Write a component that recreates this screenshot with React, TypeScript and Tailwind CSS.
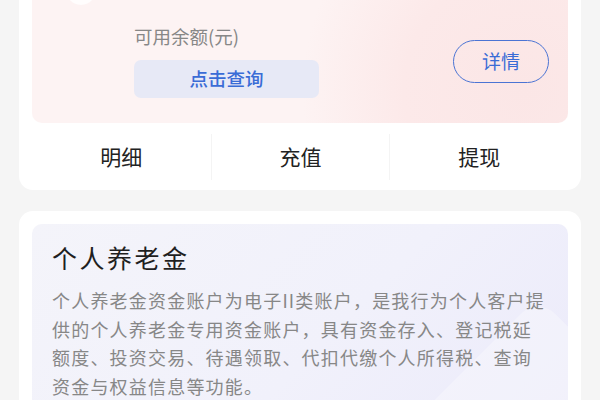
export default function App() {
  const tabs = ["明细", "充值", "提现"];

  return (
    <div className="min-h-[400px] w-[600px] overflow-hidden bg-[#f5f5f5] px-[19px] font-['Noto_Sans_CJK_SC','Noto_Sans',sans-serif]">
      {/* balance card, top part scrolled out of view */}
      <div className="-mt-[40px] rounded-[14px] bg-white px-[13px] pt-[13px]">
        <div className="rounded-[10px] bg-[#fdf3f3] bg-[radial-gradient(circle_at_92%_78%,#fbe6e6_0,#fce9e9_24%,rgba(253,243,243,0)_44%)] pb-[25px] pt-[2px]">
          <div className="ml-[34px] h-[30px] w-[30px] rounded-full bg-white/80" />
          <div className="mt-[19px] flex items-center justify-between pl-[102px] pr-[19px]">
            <div className="flex flex-col">
              <div className="text-[18.5px] leading-[24px] text-[#878787]">可用余额(元)</div>
              <button className="mt-[12px] flex h-[38px] w-[185px] items-center justify-center rounded-[7px] bg-[#e7e9f6] text-[18.5px] font-medium text-[#3a6cd6]">
                点击查询
              </button>
            </div>
            <button className="flex h-[43px] w-[96px] items-center justify-center rounded-full border-[1.5px] border-[#4b74d4] text-[19px] text-[#3a6cd6]">
              详情
            </button>
          </div>
        </div>
        <div className="grid h-[67px] grid-cols-3 items-center">
          {tabs.map((t, i) => (
            <div
              key={t}
              className={
                i === 0
                  ? "flex h-[46px] items-center justify-center text-[21px] text-[#222]"
                  : "flex h-[46px] items-center justify-center border-l border-[#f4f4f4] text-[21px] text-[#222]"
              }
            >
              {t}
            </div>
          ))}
        </div>
      </div>

      {/* pension card */}
      <div className="mt-[21px] rounded-[14px] bg-white px-[13px] pt-[13px] pb-[13px]">
        <div className="relative overflow-hidden rounded-[10px] bg-[#f3f3fb] bg-[linear-gradient(135deg,#f4f4fa_0%,#f1f1fb_55%,#ebeafa_100%)] pb-[30px] pl-[20px] pt-[16px]">
          <div className="pointer-events-none absolute right-[-60px] top-[110px] h-[180px] w-[180px] rotate-45 rounded-[24px] bg-white/30" />
          <div className="relative text-[25px] leading-[34px] tracking-[2.5px] text-[#1f1f1f]">个人养老金</div>
          <p className="relative mt-[12px] w-[496px] text-[18px] leading-[28.5px] tracking-[1.2px] text-[#878787]">
            个人养老金资金账户为电子II类账户，是我行为个人客户提供的个人养老金专用资金账户，具有资金存入、登记税延额度、投资交易、待遇领取、代扣代缴个人所得税、查询资金与权益信息等功能。
          </p>
        </div>
      </div>
    </div>
  );
}
